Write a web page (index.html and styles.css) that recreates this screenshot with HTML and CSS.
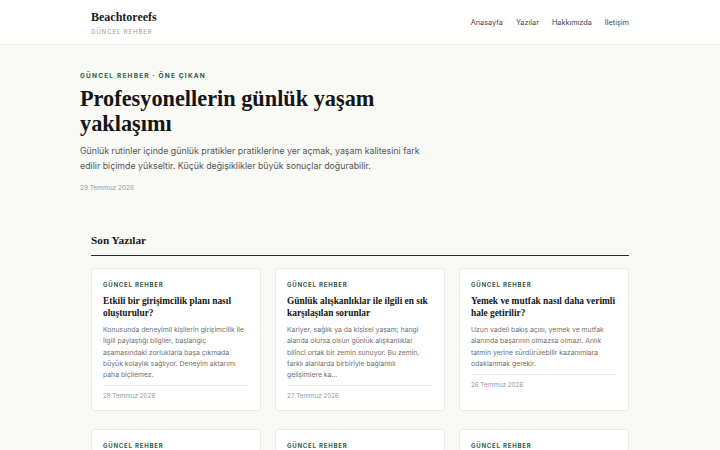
FILE: index.html
```html
<!DOCTYPE html>
<html lang="tr">
<head>
<meta charset="utf-8">
<title>Beachtoreefs</title>
<link rel="stylesheet" href="styles.css">
</head>
<body>
<header class="site-header">
  <div class="header-inner">
    <div class="brand">
      <div class="logo">Beachtoreefs</div>
      <div class="tagline">GÜNCEL REHBER</div>
    </div>
    <nav class="nav">
      <a href="#">Anasayfa</a>
      <a href="#">Yazılar</a>
      <a href="#">Hakkımızda</a>
      <a href="#">İletişim</a>
    </nav>
  </div>
</header>
<main>
  <section class="hero">
    <div class="kicker">GÜNCEL REHBER · ÖNE ÇIKAN</div>
    <h1 class="hero-title">Profesyonellerin günlük yaşam yaklaşımı</h1>
    <p class="hero-desc">Günlük rutinler içinde günlük pratikler pratiklerine yer açmak, yaşam kalitesini fark edilir biçimde yükseltir. Küçük değişiklikler büyük sonuçlar doğurabilir.</p>
    <div class="hero-date">29 Temmuz 2026</div>
  </section>
  <section class="recent">
    <h2 class="section-title">Son Yazılar</h2>
    <div class="grid">
      <article class="card">
        <div class="card-kicker">GÜNCEL REHBER</div>
        <h3 class="card-title">Etkili bir girişimcilik planı nasıl oluşturulur?</h3>
        <p class="card-text">Konusunda deneyimli kişilerin girişimcilik ile ilgili paylaştığı bilgiler, başlangıç aşamasındaki zorluklarla başa çıkmada büyük kolaylık sağlıyor. Deneyim aktarımı paha biçilemez.</p>
        <div class="card-date">28 Temmuz 2026</div>
      </article>
      <article class="card">
        <div class="card-kicker">GÜNCEL REHBER</div>
        <h3 class="card-title">Günlük alışkanlıklar ile ilgili en sık karşılaşılan sorunlar</h3>
        <p class="card-text">Kariyer, sağlık ya da kişisel yaşam; hangi alanda olursa olsun günlük alışkanlıklar bilinci ortak bir zemin sunuyor. Bu zemin, farklı alanlarda birbiriyle bağlantılı gelişimlere ka...</p>
        <div class="card-date">27 Temmuz 2026</div>
      </article>
      <article class="card">
        <div class="card-kicker">GÜNCEL REHBER</div>
        <h3 class="card-title">Yemek ve mutfak nasıl daha verimli hale getirilir?</h3>
        <p class="card-text">Uzun vadeli bakış açısı, yemek ve mutfak alanında başarının olmazsa olmazı. Anlık tatmin yerine sürdürülebilir kazanımlara odaklanmak gerekir.</p>
        <div class="card-date">26 Temmuz 2026</div>
      </article>
      <article class="card">
        <div class="card-kicker">GÜNCEL REHBER</div>
        <h3 class="card-title">Günlük yaşamda dikkat edilmesi gerekenler</h3>
        <p class="card-text">Uzmanların önerileri doğrultusunda küçük adımlarla başlamak en doğru yaklaşım.</p>
        <div class="card-date">25 Temmuz 2026</div>
      </article>
      <article class="card">
        <div class="card-kicker">GÜNCEL REHBER</div>
        <h3 class="card-title">Sağlıklı bir rutin nasıl oluşturulur?</h3>
        <p class="card-text">Düzenli alışkanlıklar uzun vadede büyük farklar yaratır.</p>
        <div class="card-date">24 Temmuz 2026</div>
      </article>
      <article class="card">
        <div class="card-kicker">GÜNCEL REHBER</div>
        <h3 class="card-title">Verimli çalışmanın püf noktaları</h3>
        <p class="card-text">Planlama ve odaklanma, verimliliğin temel taşlarıdır.</p>
        <div class="card-date">23 Temmuz 2026</div>
      </article>
    </div>
  </section>
</main>
</body>
</html>
```
FILE: styles.css
```css
* { box-sizing: border-box; }
html, body { margin: 0; padding: 0; }
body {
  background: #f9f9f6;
  font-family: Inter, "Liberation Sans", sans-serif;
  color: #1a1a1a;
}
.site-header {
  background: #ffffff;
  border-bottom: 1px solid #ecece8;
  height: 45px;
}
.header-inner {
  width: 538px;
  margin: 0 auto;
  height: 100%;
  display: flex;
  align-items: center;
  justify-content: space-between;
}
.brand { display: flex; flex-direction: column; gap: 3px; padding-top: 2px; }
.logo {
  font-family: "Liberation Serif", serif;
  font-weight: 700;
  font-size: 12px;
  line-height: 15px;
  color: #1a1a1a;
}
.tagline {
  font-size: 6px;
  letter-spacing: 0.9px;
  color: #999;
  line-height: 8px;
}
.nav { display: flex; gap: 13px; }
.nav a {
  font-size: 7.3px;
  color: #444;
  text-decoration: none;
}
.hero {
  width: 560px;
  margin: 0 auto;
  padding: 27px 0 0 0;
}
.kicker {
  font-size: 6.5px;
  font-weight: 700;
  letter-spacing: 1.2px;
  color: #2f5d4a;
  line-height: 9px;
}
.hero-title {
  font-family: "Liberation Serif", serif;
  font-weight: 700;
  font-size: 22.3px;
  line-height: 25px;
  margin: 5px 0 0 0;
  width: 340px;
  color: #151515;
}
.hero-desc {
  font-size: 8.8px;
  line-height: 15px;
  color: #555;
  margin: 7px 0 0 0;
  width: 345px;
}
.hero-date {
  font-size: 6.5px;
  color: #999;
  margin-top: 11px;
  line-height: 9px;
}
.recent {
  width: 538px;
  margin: 40px auto 0 auto;
}
.section-title {
  font-family: "Liberation Serif", serif;
  font-weight: 700;
  font-size: 11.3px;
  line-height: 14px;
  margin: 0;
  padding-bottom: 8px;
  border-bottom: 1.5px solid #2a2a2a;
}
.grid {
  display: grid;
  grid-template-columns: repeat(3, 1fr);
  column-gap: 14px;
  row-gap: 18px;
  margin-top: 12px;
}
.card {
  background: #fff;
  border: 1px solid #ebebe6;
  border-radius: 4px;
  padding: 12px 12.5px 10px 11px;
}
.card-kicker {
  font-size: 6px;
  font-weight: 700;
  letter-spacing: 0.8px;
  color: #2f5d4a;
  line-height: 8px;
}
.card-title {
  font-family: "Liberation Serif", serif;
  font-weight: 700;
  font-size: 9.4px;
  line-height: 12px;
  margin: 6px -2px 0 0;
  color: #151515;
}
.card-text {
  font-size: 6.85px;
  line-height: 11.3px;
  color: #707070;
  margin: 5px 0 0 0;
  padding-bottom: 5px;
  border-bottom: 1px solid #eeeeea;
}
.card-date {
  font-size: 6.3px;
  color: #999;
  margin-top: 6px;
  line-height: 8px;
}
```
